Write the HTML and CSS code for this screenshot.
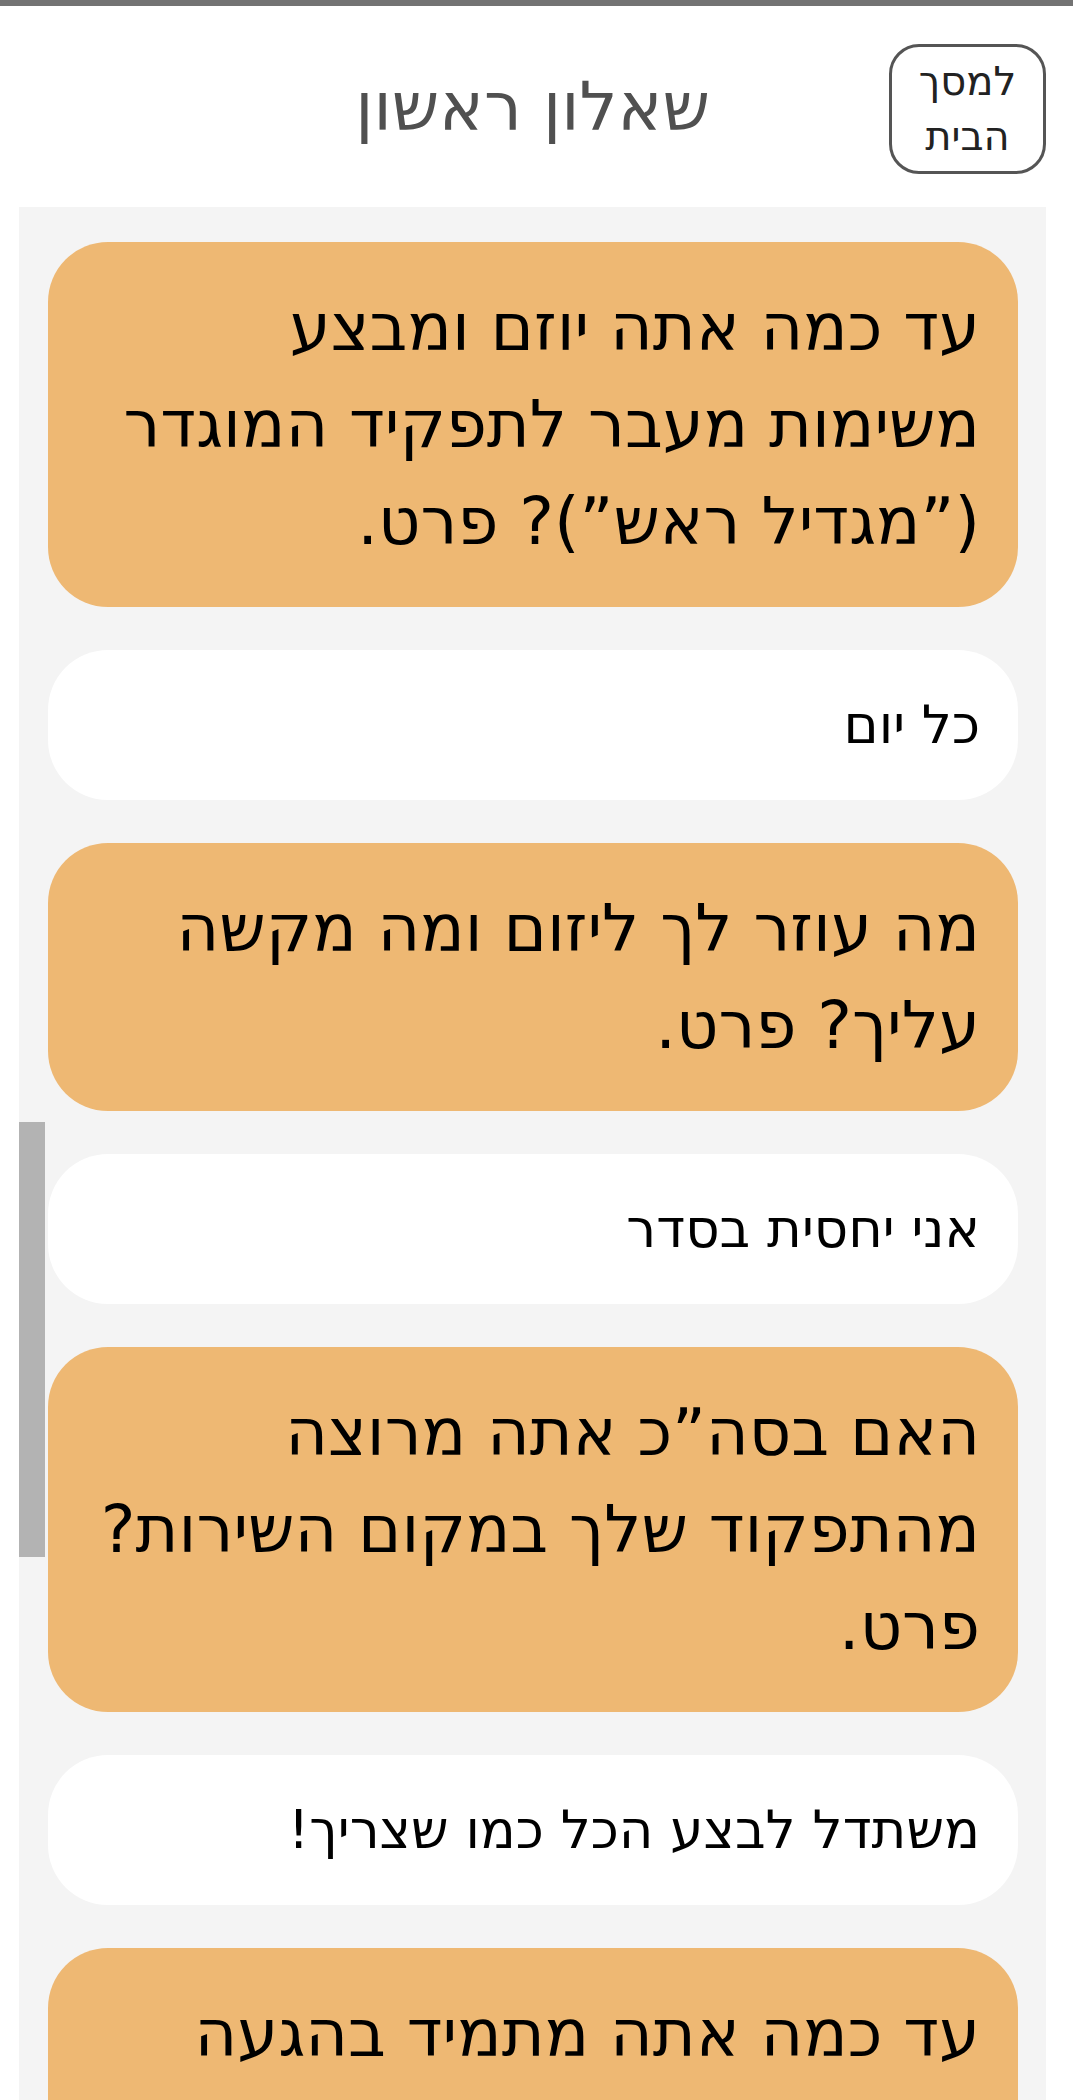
FILE: index.html
```html
<!DOCTYPE html>
<html lang="he" dir="rtl">
<head>
<meta charset="utf-8">
<title>שאלון ראשון</title>
<link rel="stylesheet" href="styles.css">
</head>
<body>
<div class="topbar"></div>
<div class="page">
  <header class="header">
    <button class="home-btn">למסך<br>הבית</button>
    <h1 class="title">שאלון ראשון</h1>
    <div class="spacer"></div>
  </header>
  <main class="panel">
    <div class="thumb"></div>
    <div class="list">
      <div class="card question">עד כמה אתה יוזם ומבצע משימות מעבר לתפקיד המוגדר (”מגדיל ראש”)? פרט.</div>
      <div class="card answer">כל יום</div>
      <div class="card question">מה עוזר לך ליזום ומה מקשה עליך? פרט.</div>
      <div class="card answer">אני יחסית בסדר</div>
      <div class="card question">האם בסה”כ אתה מרוצה מהתפקוד שלך במקום השירות? פרט.</div>
      <div class="card answer">משתדל לבצע הכל כמו שצריך!</div>
      <div class="card question">עד כמה אתה מתמיד בהגעה למקום השירות? פרט.</div>
    </div>
  </main>
</div>
</body>
</html>
```
FILE: styles.css
```css
html, body {
  margin: 0;
  padding: 0;
  background: #ffffff;
}
body {
  font-family: "DejaVu Sans", sans-serif;
  color: #000;
  height: 2100px;
  overflow: hidden;
}
.topbar {
  height: 6px;
  background: #737373;
}
.page {
  padding: 0 27px 0 19px;
}
.header {
  display: grid;
  grid-template-columns: 157px 1fr 157px;
  align-items: center;
  height: 201px;
}
.home-btn {
  width: 157px;
  height: 130px;
  border: 3px solid #555;
  border-radius: 30px;
  background: #fff;
  font-family: inherit;
  font-size: 40px;
  line-height: 55px;
  color: #222;
  padding: 0;
  margin-top: 4px;
}
.title {
  margin: 0;
  text-align: center;
  font-weight: normal;
  font-size: 67px;
  color: #505050;
}
.panel {
  position: relative;
  background: #f4f4f4;
  height: 1893px;
  overflow: hidden;
}
.thumb {
  position: absolute;
  left: 0;
  top: 915px;
  width: 26px;
  height: 435px;
  background: #b3b3b3;
}
.list {
  display: flex;
  flex-direction: column;
  gap: 43px;
  padding: 35px 28px 0 29px;
}
.card {
  border-radius: 60px;
  padding: 37px 38px 37px 30px;
}
.question {
  background: #eeb873;
  font-size: 65.5px;
  line-height: 97px;
}
.answer {
  background: #fff;
  font-size: 53px;
  line-height: 76px;
}
```
